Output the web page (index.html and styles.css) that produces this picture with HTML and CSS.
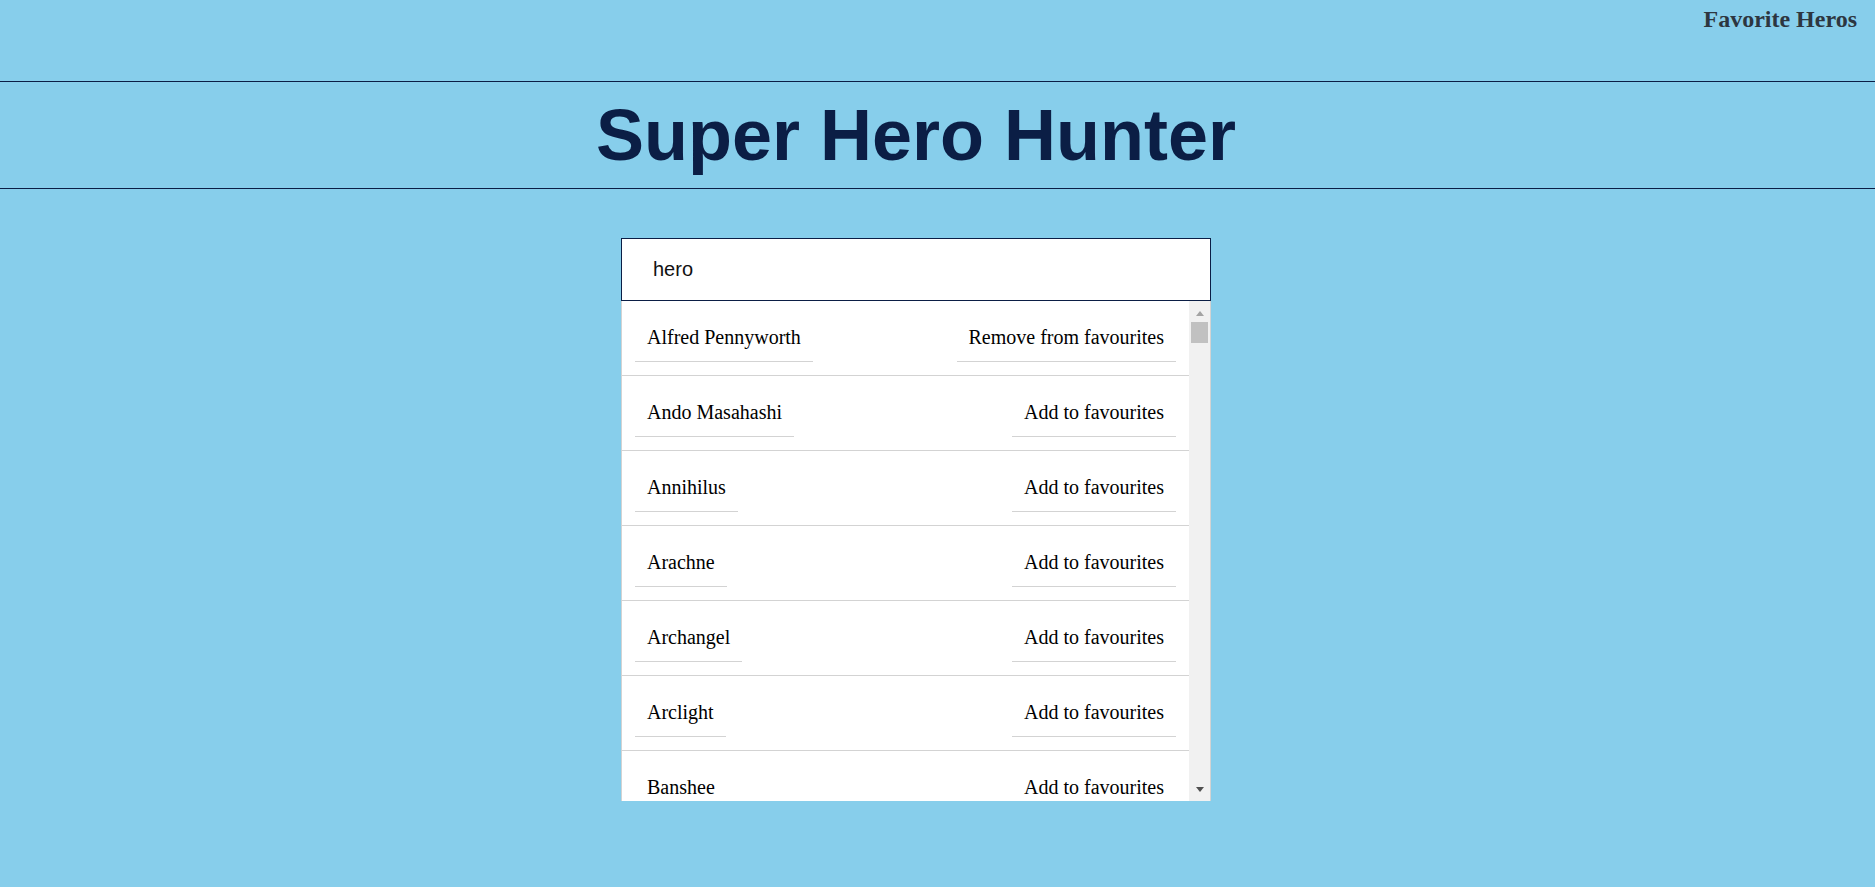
FILE: index.html
```html
<!DOCTYPE html>
<html lang="en">
<head>
<meta charset="utf-8">
<title>Super Hero Hunter</title>
<link rel="stylesheet" href="styles.css">
</head>
<body>
  <nav class="topbar">
    <a class="fav-link" href="#">Favorite Heros</a>
  </nav>
  <header class="header">
    <h1 class="title">Super Hero Hunter</h1>
  </header>
  <main class="main">
    <div class="search">
      <input class="search-input" type="text" value="hero">
      <div class="results">
        <ul class="list">
          <li class="row"><span class="cell">Alfred Pennyworth</span><button class="cell btn">Remove from favourites</button></li>
          <li class="row"><span class="cell">Ando Masahashi</span><button class="cell btn">Add to favourites</button></li>
          <li class="row"><span class="cell">Annihilus</span><button class="cell btn">Add to favourites</button></li>
          <li class="row"><span class="cell">Arachne</span><button class="cell btn">Add to favourites</button></li>
          <li class="row"><span class="cell">Archangel</span><button class="cell btn">Add to favourites</button></li>
          <li class="row"><span class="cell">Arclight</span><button class="cell btn">Add to favourites</button></li>
          <li class="row"><span class="cell">Banshee</span><button class="cell btn">Add to favourites</button></li>
          <li class="row"><span class="cell">Beast</span><button class="cell btn">Add to favourites</button></li>
        </ul>
        <div class="scrollbar">
          <div class="sb-btn"><span class="arrow-up"></span></div>
          <div class="sb-track"><div class="sb-thumb"></div></div>
          <div class="sb-btn"><span class="arrow-down"></span></div>
        </div>
      </div>
    </div>
  </main>
</body>
</html>
```
FILE: styles.css
```css
html, body {
  margin: 0;
  padding: 0;
}
body {
  background: #87ceeb;
  font-family: "Liberation Serif", "Times New Roman", serif;
  height: 887px;
  overflow: hidden;
}
.topbar {
  height: 81px;
  box-sizing: border-box;
  padding: 6px 18px 0 0;
  display: flex;
  justify-content: flex-end;
  align-items: flex-start;
}
.fav-link {
  font-family: "Liberation Serif", "Times New Roman", serif;
  font-weight: bold;
  font-size: 24px;
  color: #2d3640;
  text-decoration: none;
}
.header {
  border-top: 1px solid #0b1e45;
  border-bottom: 1px solid #0b1e45;
  height: 106px;
  display: flex;
  justify-content: center;
  align-items: center;
  padding-right: 43px;
}
.title {
  margin: 0;
  font-family: "Liberation Sans", Arial, sans-serif;
  font-weight: bold;
  font-size: 72px;
  color: #0b1e45;
  line-height: normal;
}
.main {
  padding: 49px 43px 0 0;
  display: flex;
  justify-content: center;
}
.search {
  width: 590px;
  display: flex;
  flex-direction: column;
}
.search-input {
  box-sizing: border-box;
  width: 590px;
  height: 63px;
  margin: 0;
  border: 1px solid #0b1e45;
  padding: 0 0 0 31px;
  font-family: "Liberation Sans", Arial, sans-serif;
  font-size: 20px;
  color: #111;
  background: #fff;
  outline: none;
  border-radius: 0;
}
.results {
  height: 500px;
  background: #fff;
  border-left: 1px solid #d3d3d3;
  border-right: 1px solid #d3d3d3;
  display: flex;
}
.list {
  flex: 1;
  margin: 0;
  padding: 0;
  list-style: none;
  overflow: hidden;
}
.row {
  height: 74px;
  border-bottom: 1px solid #d3d3d3;
  padding: 0 13px;
  display: flex;
  justify-content: space-between;
  align-items: center;
}
.cell {
  padding: 12px;
  border-bottom: 1px solid #d3d3d3;
  font-family: "Liberation Serif", "Times New Roman", serif;
  font-size: 20px;
  line-height: normal;
  color: #000;
}
.btn {
  background: #fff;
  border: none;
  border-bottom: 1px solid #d3d3d3;
  margin: 0;
  cursor: pointer;
}
.scrollbar {
  width: 21px;
  background: #f1f1f1;
  display: flex;
  flex-direction: column;
}
.sb-btn {
  height: 21px;
  display: flex;
  justify-content: center;
  align-items: center;
}
.arrow-up {
  width: 0;
  height: 0;
  border-left: 4.5px solid transparent;
  border-right: 4.5px solid transparent;
  border-bottom: 5px solid #a3a3a3;
  margin-top: 3px;
}
.arrow-down {
  width: 0;
  height: 0;
  border-left: 4.5px solid transparent;
  border-right: 4.5px solid transparent;
  border-top: 5px solid #505050;
  margin-bottom: 2px;
}
.sb-track {
  flex: 1;
  padding: 0 2px;
}
.sb-thumb {
  height: 21px;
  background: #c1c1c1;
}
```
